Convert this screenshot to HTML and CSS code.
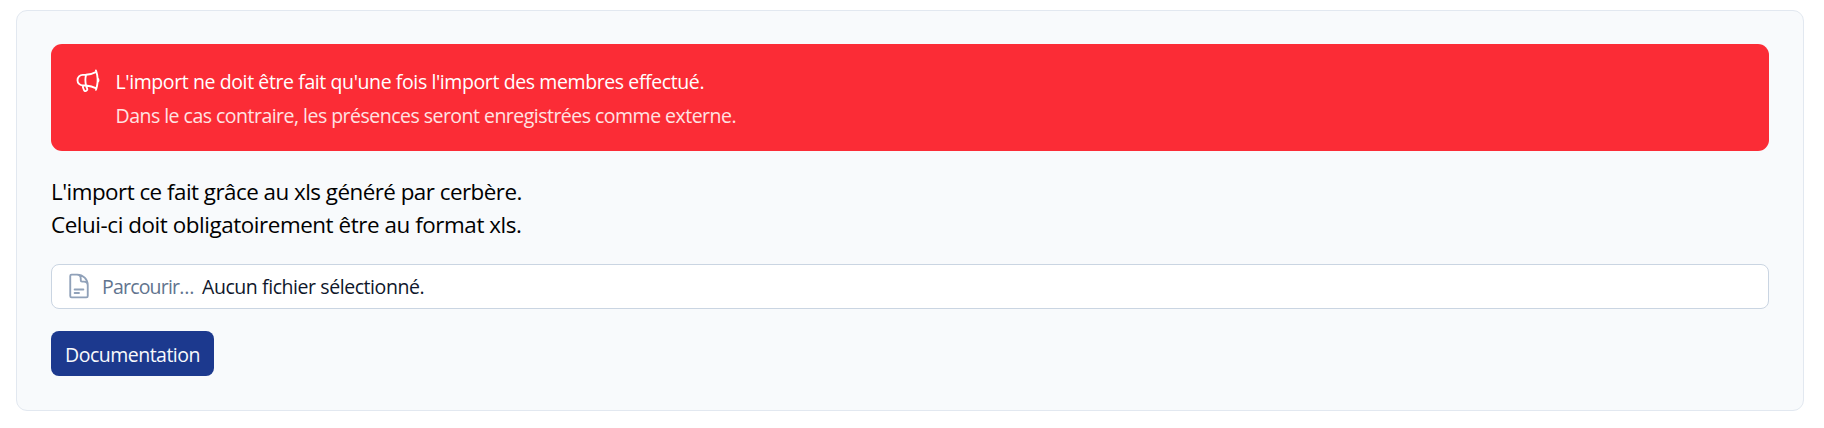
FILE: index.html
```html
<!DOCTYPE html>
<html lang="fr">
<head>
<meta charset="utf-8">
<title>Import des présences</title>
<link rel="stylesheet" href="styles.css">
</head>
<body>
<main class="card">
  <div class="alert">
    <svg class="icon" viewBox="0 0 24 24"><path d="M10.34 15.84c-.688-.06-1.386-.09-2.09-.09H7.5a4.5 4.5 0 1 1 0-9h.75c.704 0 1.402-.03 2.09-.09m0 9.18c.253.962.584 1.892.985 2.783.247.55.06 1.21-.463 1.511l-.657.38c-.551.318-1.26.117-1.527-.461a20.845 20.845 0 0 1-1.44-4.282m3.102.069a18.03 18.03 0 0 1-.59-4.59c0-1.586.205-3.124.59-4.59m0 9.18a23.848 23.848 0 0 1 8.835 2.535M10.34 6.66a23.847 23.847 0 0 0 8.835-2.535m0 0A23.74 23.74 0 0 0 18.795 3m.38 1.125a23.91 23.91 0 0 1 1.014 5.395m-1.014 8.855c-.118.38-.245.754-.38 1.125m.38-1.125a23.91 23.91 0 0 0 1.014-5.395m0-3.46c.495.413.811 1.035.811 1.73 0 .695-.316 1.317-.811 1.73m0-3.46a24.347 24.347 0 0 1 0 3.46"/></svg>
    <div class="alert-body">
      <div class="alert-title">L'import ne doit être fait qu'une fois l'import des membres effectué.</div>
      <div class="alert-text">Dans le cas contraire, les présences seront enregistrées comme externe.</div>
    </div>
  </div>
  <p class="intro"><span class="intro-first">L'import ce fait grâce au xls généré par cerbère.</span><br><span class="intro-second">Celui-ci doit obligatoirement être au format xls.</span></p>
  <label class="file">
    <svg class="icon" viewBox="0 0 24 24"><path d="M19.5 14.25v-2.625a3.375 3.375 0 0 0-3.375-3.375h-1.5A1.125 1.125 0 0 1 13.5 7.125v-1.5a3.375 3.375 0 0 0-3.375-3.375H8.25m0 12.75h7.5m-7.5 3H12M10.5 2.25H5.625c-.621 0-1.125.504-1.125 1.125v17.25c0 .621.504 1.125 1.125 1.125h12.75c.621 0 1.125-.504 1.125-1.125V11.25a9 9 0 0 0-9-9Z"/></svg>
    <span class="file-browse">Parcourir…</span>
    <span class="file-name">Aucun fichier sélectionné.</span>
  </label>
  <a class="button">Documentation</a>
</main>
</body>
</html>
```
FILE: styles.css
```css
* { box-sizing: border-box; }
body {
  margin: 0;
  padding: 10px 20px 17px 16px;
  background: #fff;
  font-family: "Open Sans", "Noto Sans", sans-serif;
  font-size: 19.5px;
}
.card {
  height: 401px;
  padding: 33px 34px;
  border: 1px solid #e2e8f0;
  border-radius: 11px;
  background: #f8fafc;
}
.icon {
  flex: none;
  width: 28px;
  height: 28px;
  fill: none;
  stroke: currentColor;
  stroke-width: 1.6;
  stroke-linecap: round;
  stroke-linejoin: round;
}
.alert {
  display: flex;
  gap: 13.5px;
  height: 107px;
  padding: 22px 23px;
  border-radius: 11px;
  background: #fb2c36;
  color: #fff;
}
.alert .icon { margin-top: 1px; }
.alert-body { margin-top: -1px; line-height: 34px; white-space: nowrap; }
.alert-title { letter-spacing: -0.4px; }
.alert-text { color: #ffe2e2; letter-spacing: -0.52px; }
.intro {
  margin: 24px 0 23px;
  font-size: 22.4px;
  line-height: 33px;
  color: #000;
  white-space: nowrap;
}
.intro-first { letter-spacing: -0.52px; }
.intro-second { letter-spacing: -0.43px; }
.file {
  display: flex;
  align-items: center;
  height: 45px;
  padding: 0 13px;
  border: 1px solid #cad5e2;
  border-radius: 8px;
  background: #fff;
  color: #90a1b9;
}
.file .icon { margin-bottom: 2px; }
.file-browse { margin-left: 9px; width: 100px; color: #62748e; letter-spacing: -0.8px; }
.file-name { color: #0f172b; letter-spacing: -0.43px; }
.button {
  display: flex;
  align-items: center;
  justify-content: center;
  width: 163px;
  height: 45px;
  margin-top: 22px;
  padding-top: 2px;
  border-radius: 8px;
  background: #1c398e;
  color: #f8fafc;
  letter-spacing: -0.51px;
}
```
